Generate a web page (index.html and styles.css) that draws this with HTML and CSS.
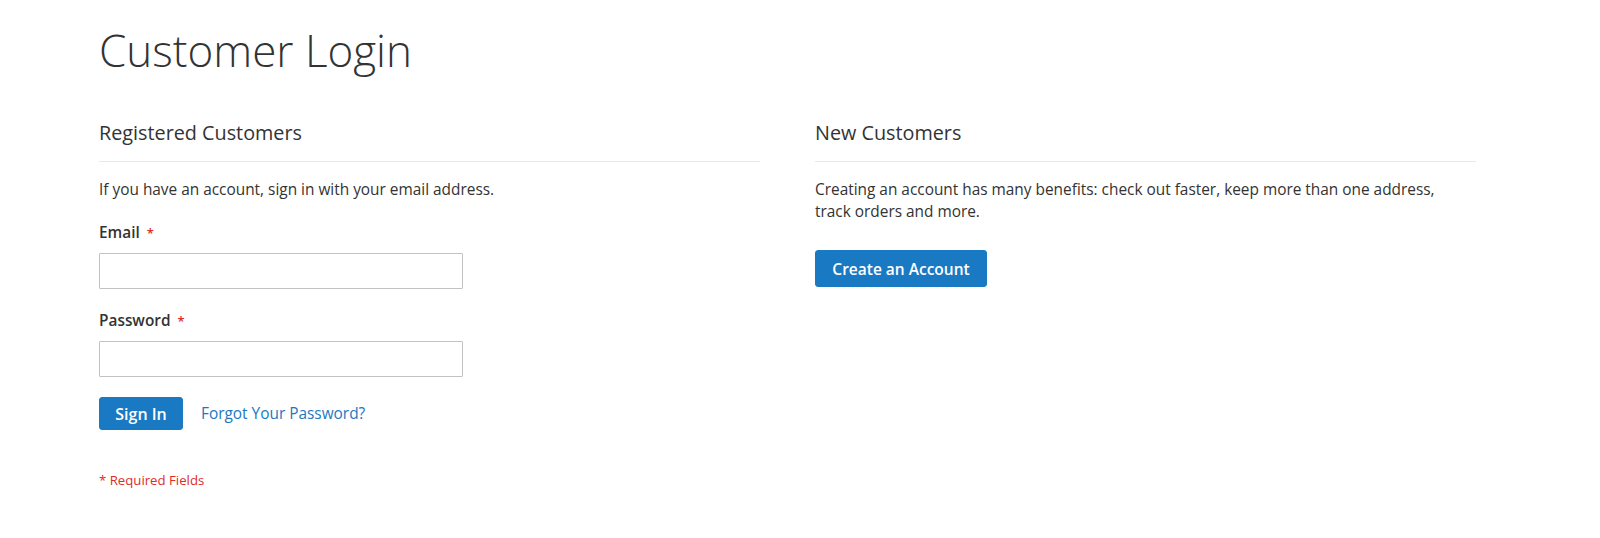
FILE: index.html
```html
<!DOCTYPE html>
<html lang="en">
<head>
  <meta charset="UTF-8" />
  <title>Customer Login</title>
  <link rel="stylesheet" href="styles.css">
</head>
<body>
  <div class="page">
    <h1 class="page-title">Customer Login</h1>
    <div class="columns">
      <div class="block">
        <h2 class="block-title">Registered Customers</h2>
        <p class="note">If you have an account, sign in with your email address.</p>
        <div class="field">
          <label>Email <span class="req">*</span></label>
          <input type="email" />
        </div>
        <div class="field">
          <label>Password <span class="req">*</span></label>
          <input type="password" />
        </div>
        <div class="actions">
          <button class="primary signin">Sign In</button>
          <a href="#" class="remind">Forgot Your Password?</a>
        </div>
        <div class="required">* Required Fields</div>
      </div>
      <div class="block">
        <h2 class="block-title">New Customers</h2>
        <p class="note benefits">Creating an account has many benefits: check out faster, keep more than one address, track orders and more.</p>
        <button class="primary create">Create an Account</button>
      </div>
    </div>
  </div>
</body>
</html>
```

FILE: styles.css
```css
* { box-sizing: border-box; margin: 0; padding: 0; }
body { font-family: "Open Sans", "Liberation Sans", sans-serif; background: #fff; color: #333; font-size: 15.4px; }
.page { padding: 22px 0 0 99px; width: 1476px; }
.page-title { font-weight: 300; font-size: 44px; line-height: 56px; color: #333; margin-bottom: 42px; }
.columns { display: grid; grid-template-columns: 661px 661px; gap: 55px; }
.block-title { font-weight: 400; font-size: 19.8px; line-height: 26px; color: #333; padding-bottom: 15px; border-bottom: 1px solid #e8e8e8; margin-bottom: 17px; }
.note { line-height: 22px; margin-bottom: 22px; }
.benefits { max-width: 640px; margin-bottom: 27px; }
.field { margin-bottom: 22px; }
.field label { display: block; font-weight: 600; line-height: 20px; margin-bottom: 10px; }
.req { color: #e02b27; font-size: 13px; margin-left: 3px; }
.field input { display: block; width: 364px; height: 36px; border: 1px solid #c2c2c2; border-radius: 1px; font-size: 14px; padding: 0 9px; }
.actions { display: flex; align-items: center; gap: 18px; margin-top: -2px; }
.primary { background: #1979c3; border: 1px solid #1979c3; color: #fff; font-family: inherit; font-weight: 600; border-radius: 3px; cursor: pointer; }
.signin { font-size: 16px; height: 33px; width: 84px; }
.create { display: block; font-size: 15.5px; height: 37px; width: 172px; }
.remind { color: #1979c3; text-decoration: none; }
.required { color: #e02b27; font-size: 13.2px; line-height: 16px; margin-top: 42px; }
```
